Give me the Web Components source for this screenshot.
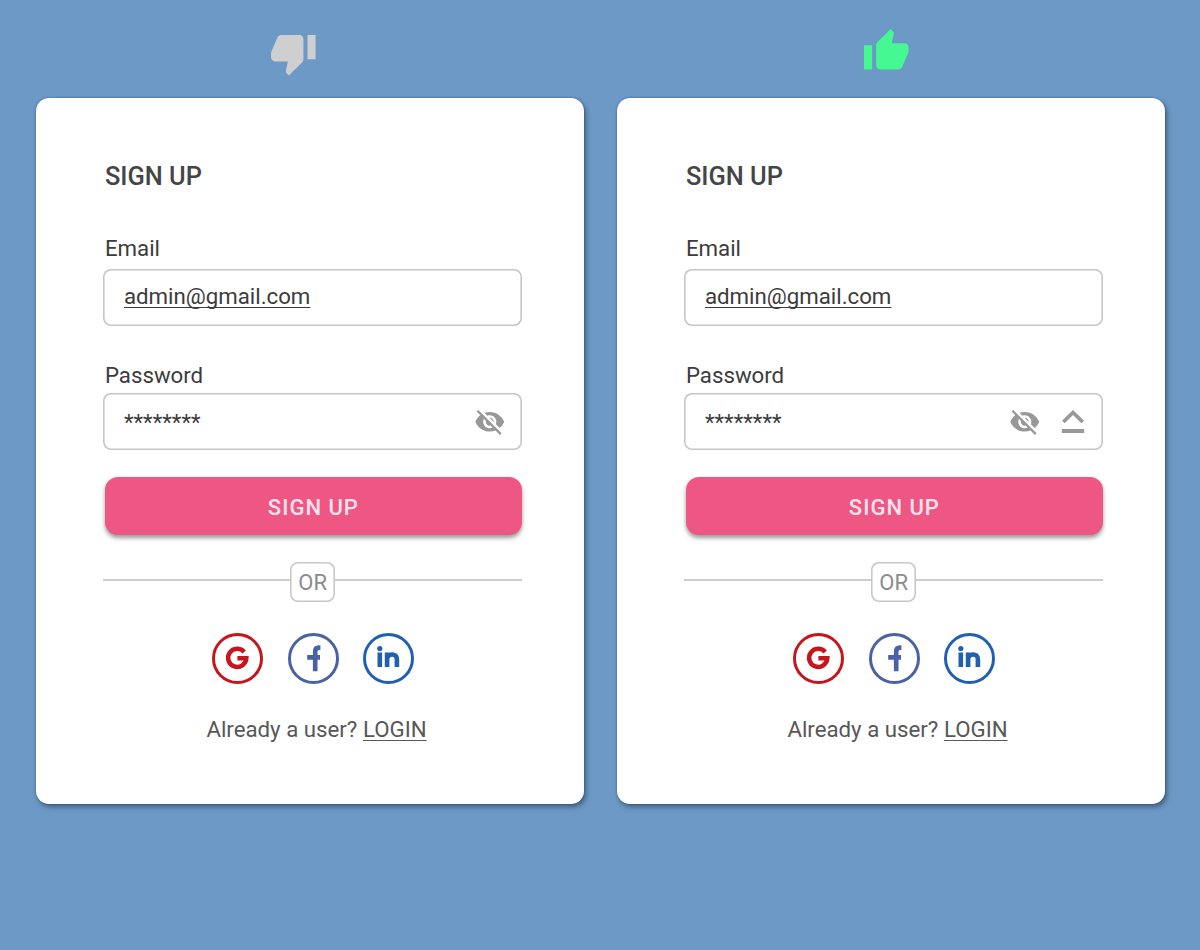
<!DOCTYPE html>
<html lang="en">
<head>
<meta charset="utf-8">
<title>Sign up</title>
<style>
  body{
    margin: 0;
    background-color: #6c99c5;
    font-family: Roboto, "Liberation Sans", sans-serif;
  }
</style>
</head>
<body>
<compare-board>
  <rate-column>
    <thumb-icon slot="mark" data-type="down"></thumb-icon>
    <signup-card data-icons="eye"></signup-card>
  </rate-column>
  <rate-column>
    <thumb-icon slot="mark" data-type="up"></thumb-icon>
    <signup-card data-icons="eye,caps"></signup-card>
  </rate-column>
</compare-board>

<script>
class CompareBoard extends HTMLElement{
  constructor(){
    super()
    this.attachShadow({mode: 'open'})
    this.shadowRoot.innerHTML = `
      <style>
        :host{
          display: flex;
          gap: 33.5px;
          box-sizing: border-box;
          height: 950px;
          padding-left: 36.4px;
          overflow: hidden;
        }
      </style>
      <slot></slot>
    `
  }
}
window.customElements.define('compare-board', CompareBoard)

class RateColumn extends HTMLElement{
  constructor(){
    super()
    this.attachShadow({mode: 'open'})
    this.shadowRoot.innerHTML = `
      <style>
        :host{
          display: block;
          width: 547.5px;
        }
        .mark{
          box-sizing: border-box;
          height: 98px;
        }
      </style>
      <div class="mark"><slot name="mark"></slot></div>
      <slot></slot>
    `
  }
}
window.customElements.define('rate-column', RateColumn)

class ThumbIcon extends HTMLElement{
  connectedCallback(){
    const up = this.dataset.type === 'up'
    const path = up
      ? 'M1 21h4V9H1v12zm22-11c0-1.1-.9-2-2-2h-6.31l.95-4.57.03-.32c0-.41-.17-.79-.44-1.06L14.17 1 7.59 7.59C7.22 7.95 7 8.45 7 9v10c0 1.1.9 2 2 2h9c.83 0 1.54-.5 1.84-1.22l3.02-7.05c.09-.23.14-.47.14-.73v-2z'
      : 'M15 3H6c-.83 0-1.54.5-1.84 1.22l-3.02 7.05c-.09.23-.14.47-.14.73v2c0 1.1.9 2 2 2h6.31l-.95 4.57-.03.32c0 .41.17.79.44 1.06L9.83 23l6.59-6.59c.36-.36.58-.86.58-1.41V5c0-1.1-.9-2-2-2zm4 0v12h4V3h-4z'
    this.attachShadow({mode: 'open'})
    this.shadowRoot.innerHTML = `
      <style>
        :host{
          display: block;
          padding: ${up ? '27px 0 0 244.5px' : '29px 0 0 232.2px'};
        }
        svg{
          display: block;
          width: 48.6px;
          height: 48.6px;
          fill: ${up ? '#46f892' : '#cfcfcf'};
        }
      </style>
      <svg viewBox="0 0 24 24"><path d="${path}"/></svg>
    `
  }
}
window.customElements.define('thumb-icon', ThumbIcon)

class FormField extends HTMLElement{
  constructor(){
    super()
    this.attachShadow({mode: 'open'})
  }
  connectedCallback(){
    this.shadowRoot.innerHTML = `
      <style>
        :host{
          display: block;
          color: #3c3c3c;
          font-size: 22.25px;
          line-height: 26px;
        }
        label{
          display: block;
          padding-left: 1.5px;
          margin-bottom: var(--label-gap, 8px);
        }
        .box{
          display: flex;
          align-items: center;
          box-sizing: border-box;
          height: 57px;
          border-radius: 8px;
          box-shadow: inset 0 0 0 1.6px #c6c6c6;
          padding: 0 var(--box-end, 16px) 0 20.5px;
        }
        .value{
          flex: 1;
          padding-bottom: var(--value-lift, 4px);
        }
        .icons{
          display: flex;
          align-items: center;
          gap: 20.5px;
        }
      </style>
      <label>${this.dataset.label}</label>
      <div class="box">
        <span class="value"><slot></slot></span>
        <span class="icons"><slot name="icon"></slot></span>
      </div>
    `
  }
}
window.customElements.define('form-field', FormField)

const fieldIcons = {
  eye: `<svg width="31.5" height="31.5" viewBox="0 0 24 24"><path d="M12 7c2.76 0 5 2.24 5 5 0 .65-.13 1.26-.36 1.83l2.92 2.92c1.51-1.26 2.7-2.89 3.43-4.75-1.73-4.39-6-7.5-11-7.5-1.4 0-2.74.25-3.98.7l2.16 2.16C10.74 7.13 11.35 7 12 7zM2 4.27l2.28 2.28.46.46C3.08 8.3 1.78 10.02 1 12c1.73 4.39 6 7.5 11 7.5 1.55 0 3.03-.3 4.38-.84l.42.42L19.73 22 21 20.73 3.27 3 2 4.27zM7.53 9.8l1.55 1.55c-.05.21-.08.43-.08.65 0 1.66 1.34 3 3 3 .22 0 .44-.03.65-.08l1.55 1.55c-.67.33-1.41.53-2.2.53-2.76 0-5-2.24-5-5 0-.79.2-1.53.53-2.2zm4.31-.78l3.15 3.15.02-.16c0-1.66-1.34-3-3-3l-.17.01z"/></svg>`,
  caps: `<svg width="24" height="31.5" viewBox="0 0 24 31.5"><path d="M12 4L23 14.7 20.4 17.2 12 8.9 3.6 17.2 1 14.7zM.9 23h22.3v3.9H.9z"/></svg>`
}

class FieldIcon extends HTMLElement{
  connectedCallback(){
    this.attachShadow({mode: 'open'})
    this.shadowRoot.innerHTML = `
      <style>
        :host{
          display: block;
        }
        svg{
          display: block;
          fill: #989898;
        }
      </style>
      ${fieldIcons[this.dataset.name]}
    `
  }
}
window.customElements.define('field-icon', FieldIcon)

const socials = {
  google: {
    color: '#c5161d',
    shape: '<path d="M32.2 19A9.1 9.1 0 1 0 34.3 25.2H25.4" stroke-width="4.5"/>'
  },
  facebook: {
    color: '#4a62a3',
    shape: '<path d="M32.4 14.6H31Q27.2 14.6 27.2 18.6V38.2M19.2 24.4H32" stroke-width="4.6"/>'
  },
  linkedin: {
    color: '#2160b0',
    shape: '<path d="M16.8 19.4V34M24.1 34V19.4M24.1 26.6C24.1 20.2 33.9 19.6 33.9 26.2V34" stroke-width="4.6"/><circle cx="16.8" cy="15.6" r="2.6" fill="#2160b0" stroke="none"/>'
  }
}

class SocialButton extends HTMLElement{
  connectedCallback(){
    const item = socials[this.dataset.name]
    this.attachShadow({mode: 'open'})
    this.shadowRoot.innerHTML = `
      <style>
        :host{
          display: block;
        }
        svg{
          display: block;
          fill: none;
          stroke: ${item.color};
        }
      </style>
      <svg width="51" height="51" viewBox="0 0 51 51">
        <circle cx="25.5" cy="25.5" r="24" stroke-width="3"/>
        ${item.shape}
      </svg>
    `
  }
}
window.customElements.define('social-button', SocialButton)

class OrDivider extends HTMLElement{
  constructor(){
    super()
    this.attachShadow({mode: 'open'})
    this.shadowRoot.innerHTML = `
      <style>
        :host{
          display: flex;
          align-items: flex-start;
        }
        i{
          flex: 1;
          height: 2px;
          margin-top: 17px;
          background-color: #cdcdcd;
        }
        i:first-child{
          flex: 0 0 188.2px;
        }
        span{
          box-sizing: border-box;
          width: 45px;
          height: 40px;
          border-radius: 8px;
          box-shadow: inset 0 0 0 1.6px #c8c8c8;
          color: #8c8c8c;
          font-size: 22px;
          line-height: 41px;
          text-align: center;
        }
      </style>
      <i></i><span><slot></slot></span><i></i>
    `
  }
}
window.customElements.define('or-divider', OrDivider)

class SignupCard extends HTMLElement{
  connectedCallback(){
    const icons = this.dataset.icons.split(',').map(item => item.trim())
    this.attachShadow({mode: 'open'})
    this.shadowRoot.innerHTML = `
      <style>
        :host{
          display: block;
          box-sizing: border-box;
          height: 705.5px;
          padding: 62.5px 62px 0 67px;
          border-radius: 13px;
          background-color: #fff;
          box-shadow: 2px 3px 5px rgba(20, 40, 70, .5), 0 0 2px rgba(20, 40, 70, .45);
        }
        h1{
          margin: 0 0 44.5px 1.5px;
          color: #454545;
          font-size: 25.4px;
          font-weight: 500;
          line-height: 30px;
        }
        u{
          text-decoration-thickness: 1px;
          text-underline-offset: 3px;
          text-decoration-skip-ink: none;
        }
        .password{
          --label-gap: 5px;
          --value-lift: 0px;
          --box-end: ${icons.length > 1 ? '18px' : '16px'};
          margin-top: 36px;
        }
        button{
          display: block;
          width: 417px;
          height: 58px;
          margin: 27px 0 0 1.5px;
          padding: 2px 0 0;
          border: 0;
          border-radius: 13px;
          background-color: #ee5684;
          box-shadow: 0 3px 4px rgba(0, 0, 0, .4);
          color: #fde4ee;
          font: 500 22px Roboto, sans-serif;
          letter-spacing: 1px;
        }
        or-divider{
          margin-top: 27px;
        }
        .socials{
          display: flex;
          gap: 25px;
          margin: 31px 0 0 108.8px;
        }
        .socials :last-child{
          margin-left: -1px;
        }
        p{
          margin: 32px 0 0 103px;
          color: #575757;
          font-size: 22.25px;
          line-height: 26px;
          white-space: nowrap;
        }
      </style>
      <h1>SIGN UP</h1>
      <form-field data-label="Email"><u>admin@gmail.com</u></form-field>
      <form-field class="password" data-label="Password">********
        ${icons.map(item => `<field-icon slot="icon" data-name="${item}"></field-icon>`).join('')}
      </form-field>
      <button type="button">SIGN UP</button>
      <or-divider>OR</or-divider>
      <div class="socials">
        <social-button data-name="google"></social-button>
        <social-button data-name="facebook"></social-button>
        <social-button data-name="linkedin"></social-button>
      </div>
      <p>Already a user? <u>LOGIN</u></p>
    `
  }
}
window.customElements.define('signup-card', SignupCard)
</script>
</body>
</html>
